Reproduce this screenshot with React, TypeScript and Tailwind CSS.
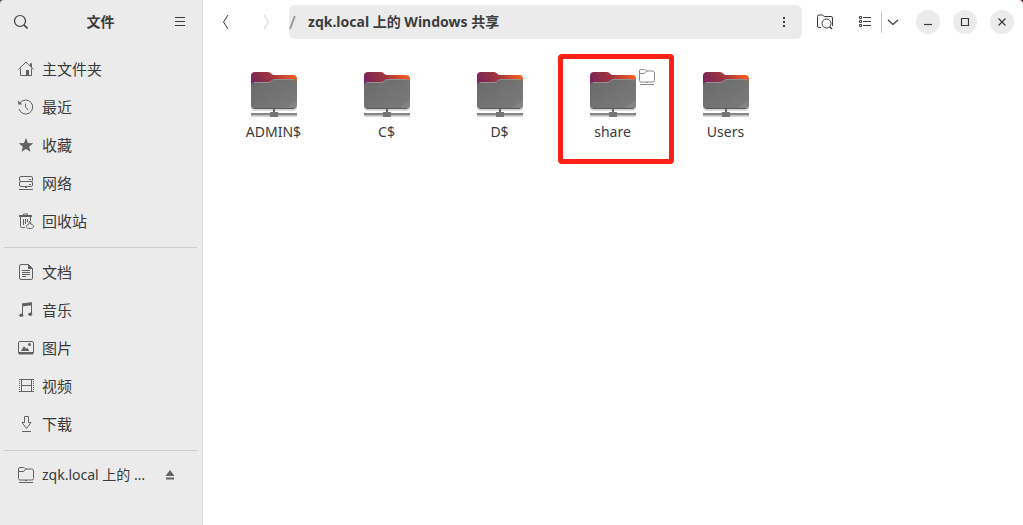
import { FC, ReactNode } from "react";

type IconProps = { children: ReactNode; className?: string };

const Icon: FC<IconProps> = ({ children, className = "" }) => (
  <svg
    viewBox="0 0 16 16"
    fill="none"
    stroke="currentColor"
    aria-hidden="true"
    className={`w-4 h-4 shrink-0 ${className}`}
  >
    {children}
  </svg>
);

const NetworkFolder: FC<{ className?: string }> = ({ className }) => (
  <Icon className={className}>
    <path d="M2 .5h3.600c1 0 1.200 1.500 2.400 1.500h5.500a2 2 0 0 1 2 2v7.500a1.500 1.500 0 0 1-1.500 1.500H2A1.500 1.500 0 0 1 .5 11.500V2A1.500 1.500 0 0 1 2 .5z" />
    <path d="M.5 4.500h4.700c1.400 0 1.300-2.500 3-2.500M1 15.500h14" />
    <path d="M7 13.500h2" />
  </Icon>
);

const places = [
  {
    label: "主文件夹",
    icon: (
      <Icon>
        <path d="M.4 8.500 8 1l7.600 7.500M2.500 7.500v7h11v-7M12.500 5V2.500h1V6" />
        <path d="M8 9h3v5.500H8z" fill="currentColor" stroke="none" />
      </Icon>
    ),
  },
  {
    label: "最近",
    icon: (
      <Icon>
        <path d="M2 4A7 7 0 1 1 1 10M7.500 4.500V8l2.500 3" />
        <path d="M.2 1.500v4h4z" fill="currentColor" stroke="none" />
      </Icon>
    ),
  },
  {
    label: "收藏",
    icon: (
      <Icon>
        <path
          d="m8 1 2 4.900 5.200.4-4 3.400 1.300 5.100L8 12l-4.500 2.800 1.300-5.100-4-3.400L6 5.900z"
          fill="currentColor"
          stroke="none"
        />
      </Icon>
    ),
  },
  {
    label: "网络",
    icon: (
      <Icon>
        <rect x="1.500" y="1.500" width="13" height="5" rx="1.500" />
        <rect x="1.500" y="6.500" width="13" height="5" rx="1.500" />
        <path d="M11 4.500h2M11 9.500h2M1 14.500h14M7 12.500h2" />
      </Icon>
    ),
  },
  {
    label: "回收站",
    icon: (
      <Icon>
        <path d="M5.500 2V1h4v1M2.500 4v9.500a1 1 0 0 0 1 1H7M12.500 4v4M5.500 6v6M7.500 6v5M9.500 6v3" />
        <path d="M1 2h13v2H1z" fill="currentColor" stroke="none" />
        <path d="m11 8.500 2 1-.5 1.500c2 .5 3 1.200 3 2.300 0 1.500-1.200 2.200-3.500 2.200s-3.500-.7-3.500-2 1-1.800 2.500-2.500z" />
      </Icon>
    ),
  },
];

const folders = [
  {
    label: "文档",
    icon: (
      <Icon>
        <path d="M3 .5h7.500l4 4V14a1.500 1.500 0 0 1-1.500 1.500H3A1.500 1.500 0 0 1 1.500 14V2A1.500 1.500 0 0 1 3 .5zM4 6.500h8M4 8.500h8M4 10.500h8M4 12.500h4" />
        <path d="M10 0v5h5z" fill="currentColor" stroke="none" />
      </Icon>
    ),
  },
  {
    label: "音乐",
    icon: (
      <Icon>
        <path d="M4.500 13V2l9-1v11" />
        <path d="M4 1.500 14 .3v3L4 4.500z" fill="currentColor" stroke="none" />
        <ellipse cx="3.300" cy="13.300" rx="2" ry="1.800" fill="currentColor" stroke="none" />
        <ellipse cx="12.200" cy="12.300" rx="2" ry="1.800" fill="currentColor" stroke="none" />
      </Icon>
    ),
  },
  {
    label: "图片",
    icon: (
      <Icon>
        <rect x=".5" y="1.500" width="15" height="12" rx="1.500" />
        <path d="M.5 12h15v1.500a1 1 0 0 1-1 1h-13a1 1 0 0 1-1-1z" fill="currentColor" stroke="none" />
        <path d="m3 11 3-5 2 3 1-1.500L11.500 11z" fill="currentColor" stroke="none" />
        <circle cx="11.500" cy="4.500" r="1.500" fill="currentColor" stroke="none" />
      </Icon>
    ),
  },
  {
    label: "视频",
    icon: (
      <Icon>
        <path d="M1 1.500h15M1 13.500h15M3.500 1v13M13.500 1v13M3.500 7.500h10" />
        <path d="M1.500 1v13M15.500 1v13" strokeDasharray="1 1" />
      </Icon>
    ),
  },
  {
    label: "下载",
    icon: (
      <Icon>
        <path d="M6.500.5h4v6H13l-4.500 6L4 6.500h2.500zM4 15.500h9" />
      </Icon>
    ),
  },
];

const shares = ["ADMIN$", "C$", "D$", "share", "Users"];

const ShareIcon: FC<{ id: string }> = ({ id }) => (
  <svg viewBox="0 0 48 48" className="w-12 h-12" aria-hidden="true">
    <defs>
      <linearGradient id={`${id}-back`} x1="0" y1="0.400" x2="1" y2="0">
        <stop offset="0" stopColor="#77216f" />
        <stop offset="0.200" stopColor="#852b4d" />
        <stop offset="0.500" stopColor="#a2363e" />
        <stop offset="0.900" stopColor="#f85b20" />
      </linearGradient>
      <linearGradient id={`${id}-front`} x1="0" y1="0" x2="1" y2="1">
        <stop offset="0" stopColor="#696969" />
        <stop offset="0.850" stopColor="#797979" />
        <stop offset="0.860" stopColor="#848484" />
        <stop offset="1" stopColor="#848484" />
      </linearGradient>
    </defs>
    <path
      d="M4 3h14c3 0 3 3 6 3h20a3 3 0 0 1 3 3v28a4 4 0 0 1-4 4H5a4 4 0 0 1-4-4V6a3 3 0 0 1 3-3z"
      fill="#000"
      opacity=".15"
    />
    <path
      d="M5 2h13c3 0 3 3 6 3h19a4 4 0 0 1 4 4v25H1V6a4 4 0 0 1 4-4z"
      fill={`url(#${id}-back)`}
    />
    <path
      d="M5 12h13c4 0 3-3 7-3h18a4 4 0 0 1 4 4v22a4 4 0 0 1-4 4H5a4 4 0 0 1-4-4V16a4 4 0 0 1 4-4z"
      fill={`url(#${id}-front)`}
    />
    <path d="M4 12.500h14c4 0 3-3 7-3h18a4 4 0 0 1 2 .5" fill="none" stroke="#929292" />
    <path d="M4 38.500h40" stroke="#565656" />
    <path d="M23 39h2v3h-2z" fill="#666" />
    <path d="M1 46h46v1H1z" fill="#000" opacity=".15" />
    <path d="M1 43h46v2.500H1z" fill="#858585" />
    <path d="M20 42h8v5h-8z" fill="#757575" />
  </svg>
);

const Place: FC<{ label: string; icon: ReactNode }> = ({ label, icon }) => (
  <li>
    <button className="flex items-center gap-2 w-full h-[38px] pl-[18px] text-left">
      <span className="text-[#626262]">{icon}</span>
      {label}
    </button>
  </li>
);

const Divider: FC = () => (
  <hr className="mt-[7px] mb-[5px] ml-1 mr-[5px] border-[#cbcbcb]" />
);

const Sidebar: FC = () => (
  <aside className="w-[203px] shrink-0 bg-[#ebebeb] border-r border-[#d9d9d9]">
    <header className="flex items-center h-11 pl-1 pr-[5px]">
      <button aria-label="搜索" className="flex justify-center w-[34px]">
        <Icon>
          <circle cx="7" cy="7" r="5.500" strokeWidth="1.200" />
          <path d="m11 11 3.500 3.500" strokeWidth="1.600" />
        </Icon>
      </button>
      <h1 className="flex-1 text-center text-sm font-bold">文件</h1>
      <button aria-label="菜单" className="flex justify-center w-[34px]">
        <Icon>
          <path d="M3 3.500h10M3 7.500h10M3 11.500h10" />
        </Icon>
      </button>
    </header>
    <nav className="pt-1.5">
      <ul>
        {places.map((place) => (
          <Place key={place.label} {...place} />
        ))}
      </ul>
      <Divider />
      <ul>
        {folders.map((folder) => (
          <Place key={folder.label} {...folder} />
        ))}
      </ul>
      <Divider />
      <div className="flex items-center h-[38px] pl-[18px] pr-6">
        <button className="flex items-center gap-2 flex-1 min-w-0 text-left text-sm whitespace-nowrap">
          <NetworkFolder className="text-[#626262]" />
          zqk.local 上的 …
        </button>
        <button aria-label="弹出" className="text-[#626262]">
          <Icon>
            <path d="m8 3 4.500 6h-9zM4 10.500h8v2H4z" fill="currentColor" stroke="none" />
          </Icon>
        </button>
      </div>
    </nav>
  </aside>
);

const windowButtons = [
  { label: "最小化", path: "M4 10.500h8" },
  { label: "最大化", path: "M4.500 4.500h7v7h-7z" },
  { label: "关闭", path: "m4.500 4.500 7 7m0-7-7 7" },
];

const Toolbar: FC = () => (
  <header className="flex items-center h-11 pl-1.5 pr-[9px]">
    <button aria-label="后退" className="flex justify-center w-[34px] mr-1.5">
      <Icon>
        <path d="M10 1 5.500 8l4.500 7" />
      </Icon>
    </button>
    <button
      aria-label="前进"
      disabled
      className="flex justify-center w-[34px] mr-1.5 text-[#cfcfcf]"
    >
      <Icon>
        <path d="m6 1 4.500 7L6 15" />
      </Icon>
    </button>
    <div className="flex items-center flex-1 min-w-0 h-[34px] rounded-md bg-[#ebebeb]">
      <span className="w-[19px] text-lg text-[#8a8a8a]">/</span>
      <button className="flex-1 min-w-0 truncate text-left text-sm font-bold text-[#3d3d3d]">
        zqk.local 上的 Windows 共享
      </button>
      <button aria-label="更多" className="flex justify-center w-9">
        <Icon>
          <path d="M7 3h2v2H7zM7 7h2v2H7zM7 11h2v2H7z" fill="currentColor" stroke="none" />
        </Icon>
      </button>
    </div>
    <button aria-label="在文件夹中搜索" className="flex justify-center w-[34px] mx-1.5">
      <Icon>
        <path d="M4 13.500H2A1.500 1.500 0 0 1 .5 12V2.500A1.500 1.500 0 0 1 2 1h3c1.500 0 1.500 1.500 3 1.500h6A1.500 1.500 0 0 1 15.500 4v8" />
        <circle cx="9.500" cy="9.500" r="4.500" />
        <path d="m12.700 12.700 2.300 2.300" strokeWidth="1.400" />
      </Icon>
    </button>
    <button aria-label="列表视图" className="flex justify-center w-[33px]">
      <Icon>
        <path d="M2.500 2.500h2v2h-2zM2.500 6.500h2v2h-2zM2.500 10.500h2v2h-2zM6 3.500h8M6 7.500h8M6 11.500h8" />
      </Icon>
    </button>
    <span className="w-px h-[22px] bg-[#c8c8c8]" />
    <button aria-label="视图选项" className="flex justify-center w-[22px] mr-3">
      <Icon>
        <path d="m3 6 5 4.500L13 6" strokeWidth="1.200" />
      </Icon>
    </button>
    <div className="flex gap-[13px]">
      {windowButtons.map(({ label, path }) => (
        <button
          key={label}
          aria-label={label}
          className="flex items-center justify-center w-6 h-6 rounded-full bg-[#ebebeb]"
        >
          <Icon>
            <path d={path} strokeWidth="1.200" />
          </Icon>
        </button>
      ))}
    </div>
  </header>
);

export default function App() {
  return (
    <div className="relative flex min-h-screen overflow-hidden bg-white text-[15px] leading-5 text-[#3a3a3a] font-['Noto_Sans','Noto_Sans_CJK_SC',sans-serif]">
      <Sidebar />
      <main className="flex-1 min-w-0">
        <Toolbar />
        <ul className="flex flex-wrap pt-[26px] pl-3.5">
          {shares.map((name) => (
            <li key={name} className="relative w-[113px]">
              <button className="flex flex-col items-center gap-1 w-full text-sm leading-5">
                <ShareIcon id={name.replace("$", "")} />
                {name}
              </button>
              {name === "share" && (
                <>
                  <NetworkFolder className="absolute -top-px right-3.5 text-[#8a8a8a]" />
                  <span className="absolute -top-4 left-0.5 w-[116px] h-[110px] border-5 border-[#ff2116] rounded-sm" />
                </>
              )}
            </li>
          ))}
        </ul>
      </main>
      {/* desktop showing behind the rounded window corners */}
      <svg viewBox="0 0 4 4" className="absolute top-0 left-0 w-1 h-1" aria-hidden="true">
        <path d="M0 0h4Q0 0 0 4z" fill="#555" />
      </svg>
      <svg viewBox="0 0 4 4" className="absolute top-0 right-0 w-1 h-1" aria-hidden="true">
        <path d="M0 0h4v4Q4 0 0 0z" fill="#3b0a2c" />
      </svg>
    </div>
  );
}
